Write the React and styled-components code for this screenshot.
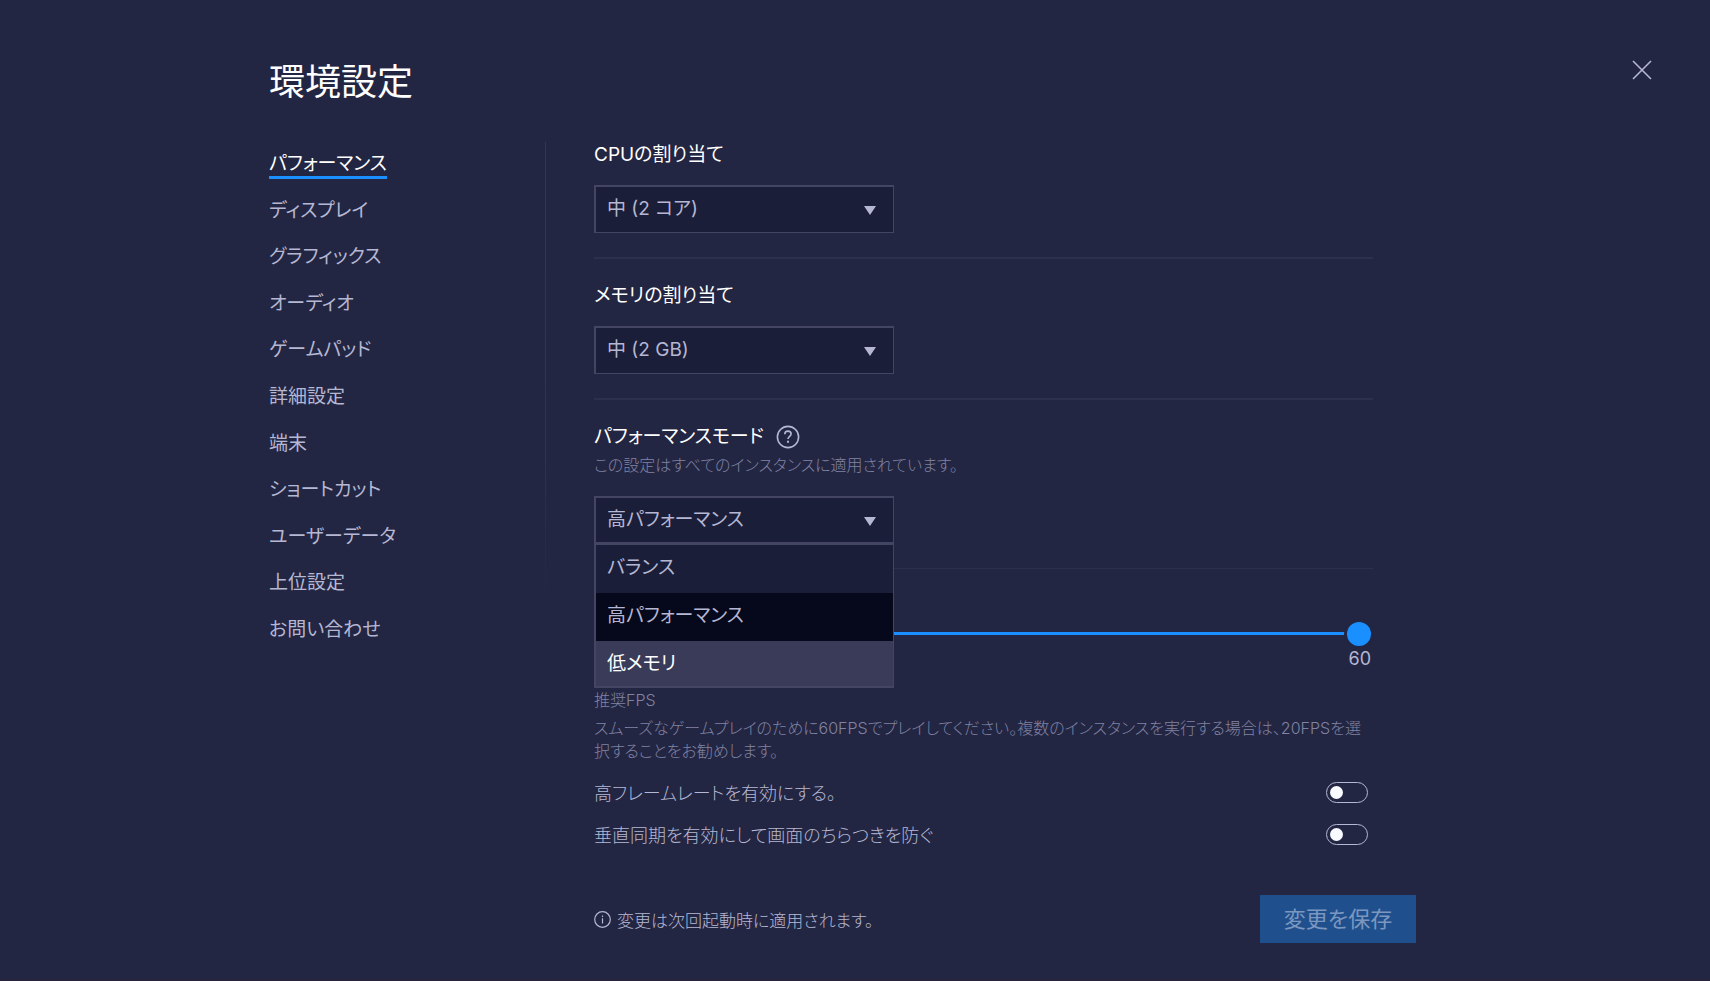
import React, { useState } from "react";
import styled, { createGlobalStyle, css } from "styled-components";

const color = {
  page: "#232642",
  field: "#1b1e38",
  border: "#434563",
  rule: "#2d304d",
  blue: "#1a8fff",
  text: "#b5b7d3",
  muted: "#8082a2",
  white: "#ffffff",
};

const GlobalStyle = createGlobalStyle`
  * { box-sizing: border-box; }
  body {
    margin: 0;
    background: ${color.page};
    color: ${color.text};
    font-family: Inter, "Noto Sans CJK JP", sans-serif;
    font-size: 19px;
    font-feature-settings: "palt";
  }
  button, select, input { font-family: inherit; font-feature-settings: inherit; }
`;

const Page = styled.div`
  position: relative;
  min-height: 100vh;
  padding: 56px 294px 0 269px;
  border-bottom: 2px solid #27233d;
`;

const Title = styled.h1`
  margin: 0;
  font-size: 36px;
  line-height: 52px;
  font-weight: 400;
  color: ${color.white};
`;

const CloseButton = styled.button`
  position: absolute;
  top: 56px;
  right: 54px;
  width: 28px;
  height: 28px;
  padding: 0;
  border: 0;
  background: none;
  color: ${color.text};
  cursor: pointer;
  svg { display: block; }
`;

const Body = styled.div`
  display: grid;
  grid-template-columns: 277px minmax(0, 1fr);
  margin-top: 34px;
`;

const Sidebar = styled.nav`
  align-self: start;
  padding-top: 10px;
  border-right: 1px solid;
  border-image: linear-gradient(#34364f 0%, #30334f 60%, ${color.page} 92%) 1;
`;

const NavList = styled.ul`
  display: flex;
  flex-direction: column;
  justify-content: space-between;
  min-height: 493px;
  margin: 0;
  padding: 0;
  list-style: none;
`;

const NavLink = styled.a`
  display: inline-block;
  line-height: 24px;
  border-bottom: 3px solid ${(p) => (p.$active ? color.blue : "transparent")};
  color: ${(p) => (p.$active ? color.white : color.text)};
  text-decoration: none;
`;

const NavItem = styled.li`
  display: flex;
`;

const Content = styled.main`
  padding-left: 48px;
`;

const Settings = styled.div`
  margin-right: 43px;
`;

const Section = styled.section`
  padding-bottom: 24px;
  margin-bottom: 24px;
  border-bottom: ${(p) => p.$line}px solid ${color.rule};
`;

const Heading = styled.div`
  display: flex;
  align-items: center;
  gap: 12px;
  height: 24px;
  padding-top: 2px;
  color: ${color.white};
  line-height: 24px;
`;

const HelpButton = styled.button`
  width: 24px;
  height: 24px;
  padding: 0;
  border: 0;
  background: none;
  color: ${color.text};
  svg { display: block; }
`;

const Note = styled.p`
  margin: 0;
  color: ${color.muted};
  font-size: 16px;
  line-height: 23px;
  font-weight: 300;
`;

const ModeNote = styled(Note)`
  margin-top: 6px;
`;

const Field = styled.div`
  position: relative;
  width: 300px;
  margin-top: 19px;
`;

const Select = styled.select`
  display: block;
  appearance: none;
  width: 100%;
  height: 48px;
  padding: 0 40px 2px 11px;
  border: 1px solid ${color.border};
  border-width: 2px 1px 1px 2px;
  border-radius: 0;
  background: ${color.field};
  color: ${color.text};
  font-size: 19px;
  outline: 0;
`;

const Arrow = styled.span`
  position: absolute;
  top: 21px;
  right: 18px;
  border: 6px solid transparent;
  border-top: 9px solid ${color.text};
  border-bottom: 0;
  pointer-events: none;
`;

const Menu = styled.ul`
  position: absolute;
  z-index: 1;
  top: 46px;
  left: 0;
  right: 0;
  margin: 0;
  padding: 0;
  border: 2px solid ${color.border};
  border-width: 3px 1px 2px 2px;
  background: ${color.field};
  list-style: none;
`;

const optionTone = {
  plain: css`background: ${color.field};`,
  selected: css`background: #06081b;`,
  hovered: css`background: #393b59; color: ${color.white};`,
};

const Option = styled.li`
  height: 48px;
  padding-left: 11px;
  line-height: 46px;
  ${(p) => optionTone[p.$tone]}
  &:last-child { height: 45px; }
`;

const SliderBlock = styled.section`
  padding: 28px 2px 0 0;
`;

const Slider = styled.input`
  display: block;
  appearance: none;
  width: 100%;
  height: 24px;
  margin: 0;
  background: none;
  &::-webkit-slider-runnable-track {
    height: 3px;
    background: ${color.blue};
  }
  &::-webkit-slider-thumb {
    appearance: none;
    width: 24px;
    height: 24px;
    margin-top: -10px;
    border-radius: 50%;
    background: ${color.blue};
    box-shadow: 0 0 0 3px ${color.page};
  }
`;

const SliderValue = styled.output`
  display: block;
  font-size: 18px;
  line-height: 28px;
  text-align: right;
`;

const Advice = styled.div`
  display: flex;
  flex-direction: column;
  gap: 5px;
  margin-top: 16px;
  margin-bottom: 8px;
`;

const ToggleRow = styled.label`
  display: flex;
  align-items: center;
  justify-content: space-between;
  height: 42px;
  padding-right: 5px;
  font-size: 18px;
  font-weight: 300;
`;

const Toggle = styled.input`
  appearance: none;
  display: flex;
  align-items: center;
  width: 42px;
  height: 21px;
  margin: 0;
  padding: 0 3px;
  border: 1px solid ${color.text};
  border-radius: 11px;
  &::before {
    content: "";
    width: 13px;
    height: 13px;
    border-radius: 50%;
    background: #f8faff;
  }
  &:checked { justify-content: flex-end; background: ${color.blue}; }
`;

const Footer = styled.footer`
  display: flex;
  align-items: center;
  justify-content: space-between;
  margin-top: 40px;
`;

const Hint = styled.div`
  display: flex;
  align-items: center;
  gap: 6px;
  font-size: 17px;
  font-weight: 300;
`;

const SaveButton = styled.button`
  width: 156px;
  height: 48px;
  padding: 0 0 4px;
  border: 0;
  background: #1f508d;
  color: #7c97bf;
  font-size: 22px;
`;

const CloseIcon = () => (
  <svg width="28" height="28" viewBox="0 0 28 28" fill="none" stroke="currentColor" strokeWidth="1.6">
    <path d="M5 5l18 18M23 5L5 23" />
  </svg>
);

const HelpIcon = () => (
  <svg width="24" height="24" viewBox="0 0 24 24" fill="none" stroke="currentColor" strokeWidth="1.6">
    <circle cx="12" cy="12" r="10.6" />
    <path d="M8.8 9.2c0-1.9 1.2-3.1 3.1-3.1s3.2 1.1 3.2 2.8c0 2.4-3.1 2.5-3.1 5.2" />
    <path d="M12 15.8v2" strokeWidth="2" />
  </svg>
);

const InfoIcon = () => (
  <svg width="17" height="17" viewBox="0 0 17 17" fill="none" stroke="currentColor" strokeWidth="1.2">
    <circle cx="8.5" cy="8.5" r="7.8" />
    <path d="M8.5 7.3v5.2M8.5 4.5v1.4" />
  </svg>
);

const pages = [
  "パフォーマンス",
  "ディスプレイ",
  "グラフィックス",
  "オーディオ",
  "ゲームパッド",
  "詳細設定",
  "端末",
  "ショートカット",
  "ユーザーデータ",
  "上位設定",
  "お問い合わせ",
];

const modes = [
  { name: "バランス", tone: "plain" },
  { name: "高パフォーマンス", tone: "selected" },
  { name: "低メモリ", tone: "hovered" },
];

const allocations = [
  { id: "cpu", label: "CPUの割り当て", value: "中 (2 コア)" },
  { id: "memory", label: "メモリの割り当て", value: "中 (2 GB)" },
];

export default function App() {
  const [fps, setFps] = useState(60);
  return (
    <Page>
      <GlobalStyle />
      <Title>環境設定</Title>
      <CloseButton aria-label="閉じる"><CloseIcon /></CloseButton>
      <Body>
        <Sidebar>
          <NavList>
            {pages.map((name, i) => (
              <NavItem key={name}>
                <NavLink href="#" $active={i === 0}>{name}</NavLink>
              </NavItem>
            ))}
          </NavList>
        </Sidebar>
        <Content>
          <Settings>
            {allocations.map(({ id, label, value }) => (
              <Section key={id} $line={2}>
                <Heading as="label" htmlFor={id}>{label}</Heading>
                <Field>
                  <Select id={id}><option>{value}</option></Select>
                  <Arrow />
                </Field>
              </Section>
            ))}
            <Section $line={1}>
              <Heading>
                <label htmlFor="mode">パフォーマンスモード</label>
                <HelpButton aria-label="ヘルプ"><HelpIcon /></HelpButton>
              </Heading>
              <ModeNote>この設定はすべてのインスタンスに適用されています。</ModeNote>
              <Field>
                <Select id="mode" defaultValue="高パフォーマンス">
                  {modes.map(({ name }) => <option key={name}>{name}</option>)}
                </Select>
                <Arrow />
                <Menu role="listbox">
                  {modes.map(({ name, tone }) => (
                    <Option key={name} role="option" aria-selected={tone === "selected"} $tone={tone}>{name}</Option>
                  ))}
                </Menu>
              </Field>
            </Section>
            <SliderBlock>
              <Slider type="range" min="1" max="60" value={fps} aria-label="FPS" onChange={(e) => setFps(e.target.value)} />
              <SliderValue>{fps}</SliderValue>
            </SliderBlock>
            <Advice>
              <Note>推奨FPS</Note>
              <Note>
                スムーズなゲームプレイのために60FPSでプレイしてください。複数のインスタンスを実行する場合は、20FPSを選択することをお勧めします。
              </Note>
            </Advice>
            <ToggleRow>高フレームレートを有効にする。<Toggle type="checkbox" /></ToggleRow>
            <ToggleRow>垂直同期を有効にして画面のちらつきを防ぐ<Toggle type="checkbox" /></ToggleRow>
          </Settings>
          <Footer>
            <Hint><InfoIcon />変更は次回起動時に適用されます。</Hint>
            <SaveButton disabled>変更を保存</SaveButton>
          </Footer>
        </Content>
      </Body>
    </Page>
  );
}
